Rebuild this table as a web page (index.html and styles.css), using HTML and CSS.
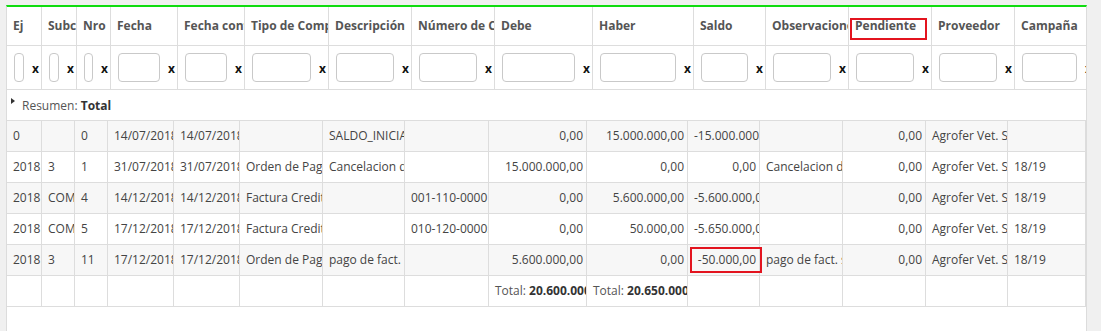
FILE: index.html
```html
<!DOCTYPE html>
<html lang="es">
<head>
<meta charset="utf-8">
<title>Cuenta corriente</title>
<link rel="stylesheet" href="styles.css">
</head>
<body>
<div class="panel">
  <div class="row head-row">
    <div class="hc">Ej</div>
    <div class="hc">Subcuenta</div>
    <div class="hc">Nro</div>
    <div class="hc">Fecha</div>
    <div class="hc">Fecha contable</div>
    <div class="hc">Tipo de Comprobante</div>
    <div class="hc">Descripción</div>
    <div class="hc">Número de Comprobante</div>
    <div class="hc">Debe</div>
    <div class="hc">Haber</div>
    <div class="hc">Saldo</div>
    <div class="hc">Observaciones</div>
    <div class="hc marked">Pendiente<span class="redbox head-box"></span></div>
    <div class="hc">Proveedor</div>
    <div class="hc">Campaña</div>
  </div>
  <div class="row head-row filter-row">
    <div class="fc"><input class="fi" type="text"><span class="fx">x</span></div>
    <div class="fc"><input class="fi" type="text"><span class="fx">x</span></div>
    <div class="fc"><input class="fi" type="text"><span class="fx">x</span></div>
    <div class="fc"><input class="fi" type="text"><span class="fx">x</span></div>
    <div class="fc"><input class="fi" type="text"><span class="fx">x</span></div>
    <div class="fc"><input class="fi" type="text"><span class="fx">x</span></div>
    <div class="fc"><input class="fi" type="text"><span class="fx">x</span></div>
    <div class="fc"><input class="fi" type="text"><span class="fx">x</span></div>
    <div class="fc"><input class="fi" type="text"><span class="fx">x</span></div>
    <div class="fc"><input class="fi" type="text"><span class="fx">x</span></div>
    <div class="fc"><input class="fi" type="text"><span class="fx">x</span></div>
    <div class="fc"><input class="fi" type="text"><span class="fx">x</span></div>
    <div class="fc"><input class="fi" type="text"><span class="fx">x</span></div>
    <div class="fc"><input class="fi" type="text"><span class="fx">x</span></div>
    <div class="fc"><input class="fi" type="text"><span class="fx">x</span></div>
  </div>
  <div class="summary"><span class="tri"></span><span class="sum-label">Resumen:</span>&nbsp;<b class="sum-val">Total</b></div>

  <div class="row body-row alt">
    <div class="c">0</div><div class="c"></div><div class="c">0</div>
    <div class="c">14/07/2018</div><div class="c">14/07/2018</div><div class="c"></div>
    <div class="c">SALDO_INICIAL</div><div class="c"></div>
    <div class="c num">0,00</div><div class="c num">15.000.000,00</div><div class="c num">-15.000.000,00</div>
    <div class="c"></div><div class="c num">0,00</div><div class="c">Agrofer Vet. SA</div><div class="c"></div>
  </div>
  <div class="row body-row">
    <div class="c">2018</div><div class="c">3</div><div class="c">1</div>
    <div class="c">31/07/2018</div><div class="c">31/07/2018</div><div class="c">Orden de Pago</div>
    <div class="c">Cancelacion de factura</div><div class="c"></div>
    <div class="c num">15.000.000,00</div><div class="c num">0,00</div><div class="c num">0,00</div>
    <div class="c">Cancelacion de factura</div><div class="c num">0,00</div><div class="c">Agrofer Vet. SA</div><div class="c">18/19</div>
  </div>
  <div class="row body-row alt">
    <div class="c">2018</div><div class="c">COMPRA</div><div class="c">4</div>
    <div class="c">14/12/2018</div><div class="c">14/12/2018</div><div class="c">Factura Credito</div>
    <div class="c"></div><div class="c">001-110-00001234</div>
    <div class="c num">0,00</div><div class="c num">5.600.000,00</div><div class="c num">-5.600.000,00</div>
    <div class="c"></div><div class="c num">0,00</div><div class="c">Agrofer Vet. SA</div><div class="c">18/19</div>
  </div>
  <div class="row body-row">
    <div class="c">2018</div><div class="c">COMPRA</div><div class="c">5</div>
    <div class="c">17/12/2018</div><div class="c">17/12/2018</div><div class="c">Factura Credito</div>
    <div class="c"></div><div class="c">010-120-00005678</div>
    <div class="c num">0,00</div><div class="c num">50.000,00</div><div class="c num">-5.650.000,00</div>
    <div class="c"></div><div class="c num">0,00</div><div class="c">Agrofer Vet. SA</div><div class="c">18/19</div>
  </div>
  <div class="row body-row alt">
    <div class="c">2018</div><div class="c">3</div><div class="c">11</div>
    <div class="c">17/12/2018</div><div class="c">17/12/2018</div><div class="c">Orden de Pago</div>
    <div class="c">pago de fact. saldo</div><div class="c"></div>
    <div class="c num">5.600.000,00</div><div class="c num">0,00</div><div class="c num marked">-50.000,00<span class="redbox cell-box"></span></div>
    <div class="c">pago de fact. saldo</div><div class="c num">0,00</div><div class="c">Agrofer Vet. SA</div><div class="c">18/19</div>
  </div>
  <div class="row body-row foot-row">
    <div class="c"></div><div class="c"></div><div class="c"></div>
    <div class="c"></div><div class="c"></div><div class="c"></div>
    <div class="c"></div><div class="c"></div>
    <div class="c"><span class="tl">Total:</span> <b class="tv">20.600.000,00</b></div>
    <div class="c"><span class="tl">Total:</span> <b class="tv">20.650.000,00</b></div>
    <div class="c"></div>
    <div class="c"></div><div class="c"></div><div class="c"></div><div class="c"></div>
  </div>
</div>
</body>
</html>
```
FILE: styles.css
```css
html, body {
  margin: 0;
  padding: 0;
}
body {
  background: #f0f0f0;
  font-family: "Open Sans", "Liberation Sans", sans-serif;
  font-size: 12px;
  color: #444;
  height: 331px;
  overflow: hidden;
}
.panel {
  margin: 5px 0 0 6px;
  width: 1079px;
  height: 324px;
  background: #fff;
  border-top: 2px solid #0fdc0f;
  border-left: 1px solid #dcdcdc;
  border-right: 1px solid #dcdcdc;
  overflow: hidden;
}
.row {
  display: grid;
  border-bottom: 1px solid #ddd;
  box-sizing: border-box;
}
.head-row {
  grid-template-columns: 35px 35px 34px 67px 67px 84px 83px 83px 98px 101px 72px 83px 83px 83px 80px;
  height: 39px;
}
.filter-row {
  height: 44px;
}
.body-row {
  grid-template-columns: 35px 33px 33px 66px 66px 83px 82px 84px 98px 101px 72px 83px 83px 82px 78px;
  height: 31px;
}
.alt {
  background: #f7f7f7;
}
.hc {
  box-sizing: border-box;
  border-right: 1px solid #ddd;
  padding-left: 6px;
  font-weight: 700;
  color: #555;
  line-height: 38px;
  white-space: nowrap;
  overflow: hidden;
}
.fc {
  box-sizing: border-box;
  border-right: 1px solid #ddd;
  padding: 0 2px 0 7px;
  display: flex;
  align-items: center;
  overflow: hidden;
}
.fi {
  flex: 1 1 auto;
  min-width: 0;
  width: 0;
  height: 29px;
  margin: 0;
  padding: 0;
  box-sizing: border-box;
  border: 1px solid #c9c9c9;
  border-radius: 4px;
  background: #fff;
}
.fx {
  flex: 0 0 auto;
  width: 7px;
  margin: 3px 0 0 8px;
  font-weight: 700;
  font-size: 12px;
  color: #111;
  line-height: 12px;
}
.summary {
  box-sizing: border-box;
  height: 31px;
  border-bottom: 1px solid #ddd;
  display: flex;
  align-items: center;
  padding-left: 4px;
  color: #555;
}
.tri {
  width: 0;
  height: 0;
  border-left: 4px solid #333;
  border-top: 3px solid transparent;
  border-bottom: 3px solid transparent;
  margin: 0 7px 9px 0;
}
.sum-val {
  color: #333;
  font-weight: 700;
}
.c {
  box-sizing: border-box;
  border-right: 1px solid #ddd;
  padding: 0 3px 0 6px;
  line-height: 30px;
  white-space: nowrap;
  overflow: hidden;
}
.num {
  text-align: right;
}
.tl {
  color: #555;
}
.tv {
  color: #333;
  font-weight: 700;
}
.marked {
  position: relative;
}
.c.marked {
  overflow: visible;
  z-index: 1;
}
.redbox {
  position: absolute;
  box-sizing: border-box;
  border: 2px solid #e3141f;
}
.head-box {
  left: 1px;
  top: 11px;
  width: 77px;
  height: 22px;
}
.cell-box {
  left: 2px;
  top: 2px;
  width: 72px;
  height: 26px;
}
```
